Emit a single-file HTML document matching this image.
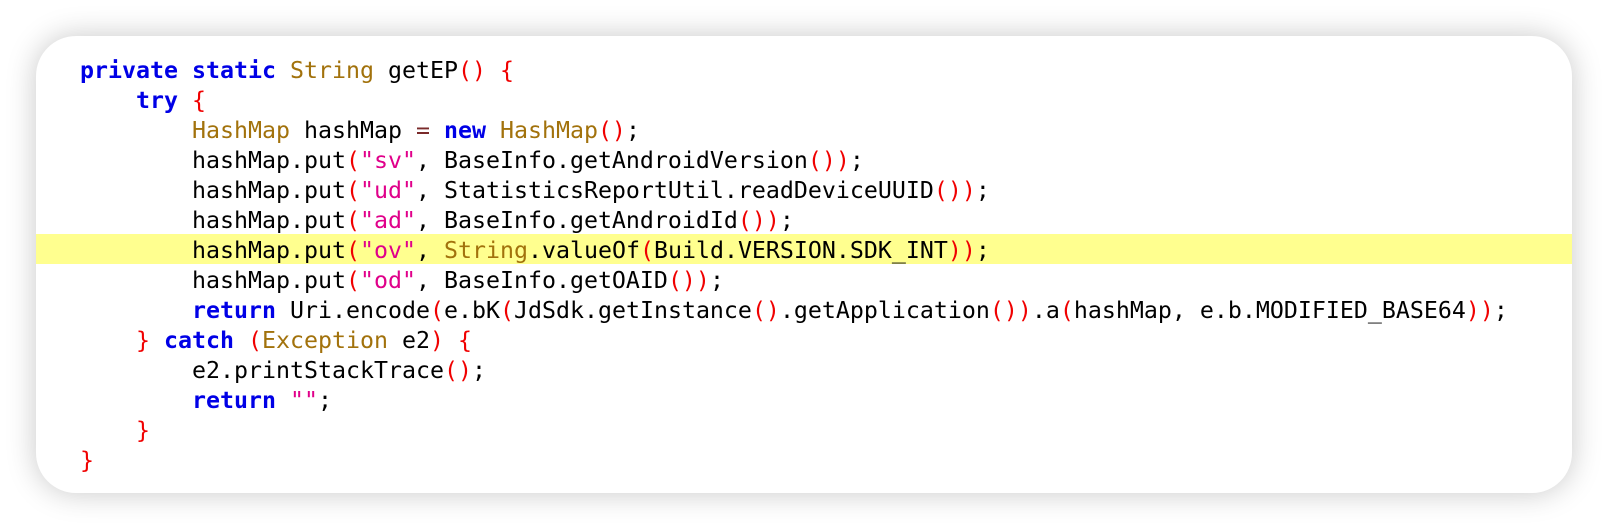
<!DOCTYPE html>
<html><head><meta charset="utf-8"><style>
html,body{margin:0;padding:0;background:#fff;width:1608px;height:530px;overflow:hidden}
.card{position:absolute;left:36px;top:36px;width:1536px;height:457px;background:#fff;border-radius:40px;box-shadow:0 0 30px rgba(0,0,0,0.22);overflow:hidden}
.hl{position:absolute;left:0;top:198px;width:1536px;height:30px;background:#ffff8f}
pre{position:absolute;left:44px;top:20px;margin:0;font-family:"DejaVu Sans Mono","Liberation Mono",monospace;font-size:23.25px;line-height:30px;color:#000}
.k{color:#0000e6;font-weight:bold}
.t{color:#a2720c}
.s{color:#e0008a}
.p{color:#f00000}
.o{color:#7a2a2a}
</style></head><body>
<div class="card"><div class="hl"></div>
<pre><span class="k">private</span> <span class="k">static</span> <span class="t">String</span> getEP<span class="p">()</span> <span class="p">{</span>
    <span class="k">try</span> <span class="p">{</span>
        <span class="t">HashMap</span> hashMap <span class="o">=</span> <span class="k">new</span> <span class="t">HashMap</span><span class="p">()</span>;
        hashMap.put<span class="p">(</span><span class="s">"sv"</span>, BaseInfo.getAndroidVersion<span class="p">())</span>;
        hashMap.put<span class="p">(</span><span class="s">"ud"</span>, StatisticsReportUtil.readDeviceUUID<span class="p">())</span>;
        hashMap.put<span class="p">(</span><span class="s">"ad"</span>, BaseInfo.getAndroidId<span class="p">())</span>;
        hashMap.put<span class="p">(</span><span class="s">"ov"</span>, <span class="t">String</span>.valueOf<span class="p">(</span>Build.VERSION.SDK_INT<span class="p">))</span>;
        hashMap.put<span class="p">(</span><span class="s">"od"</span>, BaseInfo.getOAID<span class="p">())</span>;
        <span class="k">return</span> Uri.encode<span class="p">(</span>e.bK<span class="p">(</span>JdSdk.getInstance<span class="p">()</span>.getApplication<span class="p">())</span>.a<span class="p">(</span>hashMap, e.b.MODIFIED_BASE64<span class="p">))</span>;
    <span class="p">}</span> <span class="k">catch</span> <span class="p">(</span><span class="t">Exception</span> e2<span class="p">)</span> <span class="p">{</span>
        e2.printStackTrace<span class="p">()</span>;
        <span class="k">return</span> <span class="s">""</span>;
    <span class="p">}</span>
<span class="p">}</span></pre>
</div>
</body></html>
